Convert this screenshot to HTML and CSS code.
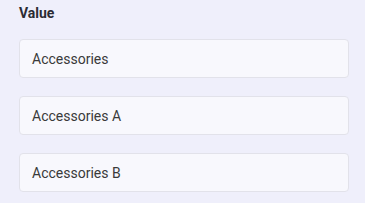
FILE: index.html
```html
<!DOCTYPE html>
<html>
<head>
<meta charset="utf-8">
<link rel="stylesheet" href="styles.css">
</head>
<body>
<div class="field">
  <div class="label">Value</div>
  <div class="list">
    <div class="item">Accessories</div>
    <div class="item">Accessories A</div>
    <div class="item">Accessories B</div>
  </div>
</div>
</body>
</html>
```
FILE: styles.css
```css
html, body {
  margin: 0;
  padding: 0;
  background: #efeffb;
  font-family: Roboto, "Liberation Sans", sans-serif;
}
.field {
  padding: 4px 16px 0 19px;
}
.label {
  font-size: 14px;
  font-weight: 700;
  color: #2b2b33;
  line-height: 18px;
  height: 18px;
}
.list {
  margin-top: 17px;
  display: flex;
  flex-direction: column;
  gap: 18px;
}
.item {
  height: 37px;
  border: 1px solid #e2e2ea;
  border-radius: 4px;
  background: #f8f8fd;
  box-sizing: content-box;
  padding: 0 12px;
  display: flex;
  align-items: center;
  font-size: 14px;
  color: #3a3a3a;
}
```
